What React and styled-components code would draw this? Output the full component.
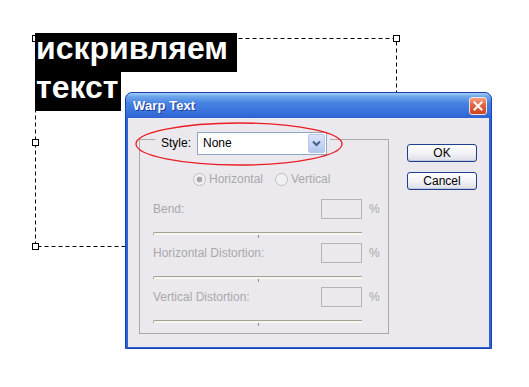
import React from "react";
import styled, { createGlobalStyle } from "styled-components";

const GlobalStyle = createGlobalStyle`
  html, body { margin: 0; padding: 0; background: #ffffff; }
  body { font-family: "Liberation Sans", Arial, sans-serif; }
  * { box-sizing: border-box; }
`;

const Stage = styled.div`
  position: relative;
  width: 529px;
  height: 387px;
  overflow: hidden;
  background: #ffffff;
`;

const SelectionFrame = styled.div`
  position: absolute;
  left: 35px;
  top: 38px;
  width: 361px;
  height: 208px;
`;

const FrameLines = styled.svg`
  position: absolute;
  left: 0;
  top: 0;
  overflow: visible;
`;

const Handle = styled.div`
  position: absolute;
  left: ${(p) => p.$x - 3}px;
  top: ${(p) => p.$y - 3}px;
  width: 7px;
  height: 7px;
  background: #ffffff;
  border: 1px solid #000000;
`;

const Caption = styled.div`
  position: absolute;
  left: 35px;
  top: 33px;
  display: flex;
  flex-direction: column;
  align-items: flex-start;
`;

const CaptionLine = styled.div`
  background: #000000;
  color: #ffffff;
  font-family: "Liberation Sans", Arial, sans-serif;
  font-weight: bold;
  font-size: 32px;
  line-height: 30px;
  height: 39px;
  padding: 0 ${(p) => p.$pr}px 9px 1px;
  white-space: nowrap;
`;

const Dialog = styled.div`
  position: absolute;
  left: 125px;
  top: 92px;
  width: 367px;
  height: 257px;
  display: flex;
  flex-direction: column;
  background: #2e63d6;
  border: 1px solid #1a3fae;
  border-radius: 7px 7px 0 0;
  font-family: "Liberation Sans", Arial, sans-serif;
  font-size: 12px;
`;

const TitleBar = styled.div`
  height: 25px;
  flex: none;
  display: flex;
  align-items: center;
  justify-content: space-between;
  padding: 0 4px 0 7px;
  border-radius: 6px 6px 0 0;
  background: linear-gradient(
    180deg,
    #a4cdf6 0%,
    #6ea6ec 14%,
    #4580e0 42%,
    #3a74dc 72%,
    #2e62d2 100%
  );
`;

const TitleText = styled.span`
  color: #ffffff;
  font-weight: bold;
  font-size: 13px;
  text-shadow: 1px 1px 0 #1a3c96;
  letter-spacing: 0.1px;
`;

const CloseButton = styled.div`
  width: 18px;
  height: 18px;
  border: 1px solid #f3e4e0;
  border-radius: 3px;
  background: linear-gradient(180deg, #f3a084 0%, #e46440 45%, #cc4420 100%);
  display: flex;
  align-items: center;
  justify-content: center;
`;

const Body = styled.div`
  flex: 1;
  margin: 0 2px 2px 2px;
  background: #ebe9ed;
  display: flex;
  align-items: flex-start;
  gap: 18px;
  padding: 21px 12px 13px 11px;
`;

const GroupBox = styled.div`
  width: 250px;
  height: 195px;
  border: 1px solid #adabaa;
  display: flex;
  flex-direction: column;
  padding-bottom: 2px;
`;

const LegendRow = styled.div`
  align-self: flex-start;
  display: flex;
  align-items: center;
  gap: 6px;
  height: 24px;
  margin: -9px 0 0 15px;
  padding: 0 3px 0 6px;
  background: #ebe9ed;
`;

const StyleLabel = styled.span`
  color: #000000;
`;

const Select = styled.div`
  width: 130px;
  height: 23px;
  border: 1px solid #8fa6c4;
  background: #ffffff;
  display: flex;
  align-items: center;
  padding: 0 1px 0 5px;
  color: #000000;
`;

const SelectArrow = styled.div`
  margin-left: auto;
  width: 17px;
  height: 19px;
  border: 1px solid #b8c8ea;
  border-radius: 2px;
  background: linear-gradient(180deg, #dbe5fa 0%, #c5d4f3 60%, #b3c6ee 100%);
  display: flex;
  align-items: center;
  justify-content: center;
`;

const RadioRow = styled.div`
  display: flex;
  align-items: center;
  gap: 12px;
  height: 14px;
  margin-top: 17px;
  padding-left: 53px;
`;

const RadioOption = styled.div`
  display: flex;
  align-items: center;
  gap: 3px;
  color: #aaa8aa;
`;

const RadioDot = styled.span`
  width: 13px;
  height: 13px;
  border-radius: 50%;
  border: 1px solid #c0bebf;
  background: ${(p) =>
    p.$checked
      ? "radial-gradient(circle, #a8a6a8 0 2.6px, #f1f0f3 3.2px)"
      : "#f1f0f3"};
`;

const FieldRow = styled.div`
  display: flex;
  align-items: center;
  height: 20px;
  margin-top: ${(p) => p.$mt || 0}px;
  padding: 0 7px 0 13px;
`;

const FieldLabel = styled.span`
  flex: 1;
  color: #aaa8aa;
`;

const ValueBox = styled.div`
  width: 41px;
  height: 20px;
  border: 1px solid #b6b4b4;
`;

const Percent = styled.span`
  width: 12px;
  margin-left: 7px;
  color: #aaa8aa;
`;

const SliderTrack = styled.div`
  height: 24px;
  padding: 13px 0 0 13px;
`;

const Groove = styled.div`
  position: relative;
  width: 209px;
  height: 3px;
  border-top: 1px solid #a3a29e;
  border-left: 1px solid #a3a29e;
  border-radius: 2px 0 0 0;
  background: #f8f6ea;

  &::after {
    content: "";
    position: absolute;
    left: 104px;
    top: 2px;
    width: 1px;
    height: 3px;
    background: #8f8e8a;
  }
`;

const ButtonColumn = styled.div`
  display: flex;
  flex-direction: column;
  gap: 10px;
  margin-top: 5px;
`;

const DialogButton = styled.div`
  width: 70px;
  height: 18px;
  border: 1px solid #1f3f8f;
  border-radius: 3px;
  background: linear-gradient(180deg, #ffffff 0%, #f3f2f6 50%, #dcdfea 100%);
  box-shadow: inset 0 -1px 0 #c3c9dc;
  display: flex;
  align-items: center;
  justify-content: center;
  color: #000000;
  font-size: 12px;
`;

const Annotation = styled.svg`
  position: absolute;
  left: 134px;
  top: 121px;
  overflow: visible;
  pointer-events: none;
`;

const handles = [
  [0, 0],
  [180, 0],
  [361, 0],
  [0, 104],
  [361, 104],
  [0, 208],
  [180, 208],
  [361, 208],
];

const fields = [
  { label: "Bend:", mt: 13 },
  { label: "Horizontal Distortion:", mt: 0 },
  { label: "Vertical Distortion:", mt: 0 },
];

export default function App() {
  return (
    <>
      <GlobalStyle />
      <Stage>
        <SelectionFrame>
          <FrameLines width="362" height="209">
            <rect
              x="0.5"
              y="0.5"
              width="361"
              height="208"
              fill="none"
              stroke="#000"
              strokeWidth="1"
              strokeDasharray="4 3"
            />
          </FrameLines>
          {handles.map(([x, y]) => (
            <Handle key={`${x}-${y}`} $x={x} $y={y} />
          ))}
        </SelectionFrame>

        <Caption>
          <CaptionLine $pr={9}>искривляем</CaptionLine>
          <CaptionLine $pr={2}>текст</CaptionLine>
        </Caption>

        <Dialog>
          <TitleBar>
            <TitleText>Warp Text</TitleText>
            <CloseButton>
              <svg width="10" height="10" viewBox="0 0 10 10">
                <path
                  d="M1.5 1.5 L8.5 8.5 M8.5 1.5 L1.5 8.5"
                  stroke="#fff"
                  strokeWidth="2"
                  strokeLinecap="square"
                />
              </svg>
            </CloseButton>
          </TitleBar>
          <Body>
            <GroupBox>
              <LegendRow>
                <StyleLabel>Style:</StyleLabel>
                <Select>
                  None
                  <SelectArrow>
                    <svg width="9" height="7" viewBox="0 0 9 7">
                      <path
                        d="M1 1.5 L4.5 5 L8 1.5"
                        fill="none"
                        stroke="#4a5d86"
                        strokeWidth="2"
                      />
                    </svg>
                  </SelectArrow>
                </Select>
              </LegendRow>
              <RadioRow>
                <RadioOption>
                  <RadioDot $checked />
                  Horizontal
                </RadioOption>
                <RadioOption>
                  <RadioDot />
                  Vertical
                </RadioOption>
              </RadioRow>
              {fields.map((f) => (
                <React.Fragment key={f.label}>
                  <FieldRow $mt={f.mt}>
                    <FieldLabel>{f.label}</FieldLabel>
                    <ValueBox />
                    <Percent>%</Percent>
                  </FieldRow>
                  <SliderTrack>
                    <Groove />
                  </SliderTrack>
                </React.Fragment>
              ))}
            </GroupBox>
            <ButtonColumn>
              <DialogButton>OK</DialogButton>
              <DialogButton>Cancel</DialogButton>
            </ButtonColumn>
          </Body>
        </Dialog>

        <Annotation width="210" height="46">
          <ellipse
            cx="105"
            cy="23"
            rx="103"
            ry="21"
            fill="none"
            stroke="#ec1c24"
            strokeWidth="1.3"
          />
        </Annotation>
      </Stage>
    </>
  );
}
